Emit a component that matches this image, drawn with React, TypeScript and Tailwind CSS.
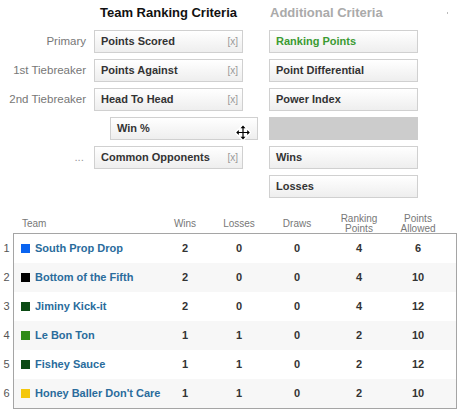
import React from 'react';

type Team = {
  name: string;
  color: string;
  wins: number;
  losses: number;
  draws: number;
  rankingPoints: number;
  pointsAllowed: number;
};

const teams: Team[] = [
  { name: 'South Prop Drop', color: 'bg-[#0a64f0]', wins: 2, losses: 0, draws: 0, rankingPoints: 4, pointsAllowed: 6 },
  { name: 'Bottom of the Fifth', color: 'bg-black', wins: 2, losses: 0, draws: 0, rankingPoints: 4, pointsAllowed: 10 },
  { name: 'Jiminy Kick-it', color: 'bg-[#0b4a14]', wins: 2, losses: 0, draws: 0, rankingPoints: 4, pointsAllowed: 12 },
  { name: 'Le Bon Ton', color: 'bg-[#2f8a18]', wins: 1, losses: 1, draws: 0, rankingPoints: 2, pointsAllowed: 10 },
  { name: 'Fishey Sauce', color: 'bg-[#0b4a14]', wins: 1, losses: 1, draws: 0, rankingPoints: 2, pointsAllowed: 12 },
  { name: "Honey Baller Don't Care", color: 'bg-[#f4c70c]', wins: 1, losses: 1, draws: 0, rankingPoints: 2, pointsAllowed: 10 },
];

const cols = 'grid grid-cols-[142px_58px_50px_66px_58px_60px_1fr]';

function Criterion({ label, removable, green }: { label: string; removable?: boolean; green?: boolean }) {
  return (
    <div className="flex h-[23px] items-center justify-between border border-[#d0d0d0] bg-linear-to-b from-white to-[#eeeeee] pl-[6px] pr-[4px]">
      <span className={`text-[11px] font-bold ${green ? 'text-[#3b9b32]' : 'text-[#333]'}`}>{label}</span>
      {removable && <span className="text-[10px] text-[#999]">[x]</span>}
    </div>
  );
}

function MoveCursor() {
  return (
    <svg className="absolute right-[7px] top-[7px]" width="16" height="17" viewBox="0 0 16 17">
      <g stroke="white" strokeWidth="2.5" strokeLinejoin="round">
        <path d="M8 1 L11 4.5 L9 4.5 L9 7.5 L12 7.5 L12 5.5 L15 8.5 L12 11.5 L12 9.5 L9 9.5 L9 12.5 L11 12.5 L8 16 L5 12.5 L7 12.5 L7 9.5 L4 9.5 L4 11.5 L1 8.5 L4 5.5 L4 7.5 L7 7.5 L7 4.5 L5 4.5 Z" fill="white" />
      </g>
      <path d="M8 1.5 L10.5 4.3 L8.6 4.3 L8.6 7.9 L12.2 7.9 L12.2 6 L14.8 8.5 L12.2 11 L12.2 9.1 L8.6 9.1 L8.6 12.7 L10.5 12.7 L8 15.5 L5.5 12.7 L7.4 12.7 L7.4 9.1 L3.8 9.1 L3.8 11 L1.2 8.5 L3.8 6 L3.8 7.9 L7.4 7.9 L7.4 4.3 L5.5 4.3 Z" fill="black" />
    </svg>
  );
}

export default function App() {
  return (
    <div className="relative h-[414px] w-[460px] bg-white font-['Liberation_Sans',Arial,sans-serif]">
      <span className="absolute left-[447px] top-[12px] h-[2px] w-px bg-[#bbb]" />

      {/* criteria */}
      <div className="grid grid-cols-[88px_149px_150px] gap-x-[6px] gap-y-[6px] pt-[2px] [&>*]:min-w-0">
        <div />
        <div className="flex h-[22px] items-center justify-center text-[13px] font-bold text-[#111]">Team Ranking Criteria</div>
        <div className="ml-[21px] flex h-[22px] items-center text-[13px] font-bold text-[#aaa]">Additional Criteria</div>

        <div className="flex h-[23px] items-center justify-end pr-[2px] text-[11.5px] text-[#777]">Primary</div>
        <Criterion label="Points Scored" removable />
        <div className="ml-[20px] w-[149px]"><Criterion label="Ranking Points" green /></div>

        <div className="flex h-[23px] items-center justify-end pr-[2px] text-[11.5px] text-[#777]">1st Tiebreaker</div>
        <Criterion label="Points Against" removable />
        <div className="ml-[20px] w-[149px]"><Criterion label="Point Differential" /></div>

        <div className="flex h-[23px] items-center justify-end pr-[2px] text-[11.5px] text-[#777]">2nd Tiebreaker</div>
        <Criterion label="Head To Head" removable />
        <div className="ml-[20px] w-[149px]"><Criterion label="Power Index" /></div>

        <div />
        <div className="relative ml-[16px] w-[148px]">
          <Criterion label="Win %" />
          <MoveCursor />
        </div>
        <div className="ml-[20px] h-[23px] w-[149px] bg-[#cccccc]" />

        <div className="flex h-[23px] items-center justify-end pr-[4px] text-[11.5px] text-[#999]">...</div>
        <Criterion label="Common Opponents" removable />
        <div className="ml-[20px] w-[149px]"><Criterion label="Wins" /></div>

        <div />
        <div />
        <div className="ml-[20px] w-[149px]"><Criterion label="Losses" /></div>
      </div>

      {/* standings */}
      <div className="mt-[16px]">
        <div className={`${cols} ml-[14px] h-[19px] w-[442px] items-center text-[10px] leading-[10px] text-[#777]`}>
          <div className="pl-[8px]">Team</div>
          <div className="text-center">Wins</div>
          <div className="text-center">Losses</div>
          <div className="text-center">Draws</div>
          <div className="text-center">Ranking<br />Points</div>
          <div className="text-center">Points<br />Allowed</div>
          <div />
        </div>

        <div className="flex">
          <div className="w-[13px] pt-px">
            {teams.map((t, i) => (
              <div key={t.name} className="flex h-[29px] items-center justify-center text-[11px] text-[#555]">{i + 1}</div>
            ))}
          </div>
          <div className="w-[444px] border border-[#a5a5a5]">
            {teams.map((t, i) => (
              <div
                key={t.name}
                className={`${cols} h-[29px] items-center text-[11px] font-bold text-[#333] ${i % 2 === 1 ? 'bg-[#f7f7f7]' : 'bg-white'}`}
              >
                <div className="flex items-center gap-[5px] pl-[7px]">
                  <span className={`h-[9px] w-[9px] shrink-0 ${t.color}`} />
                  <span className="whitespace-nowrap text-[#2a6c9c]">{t.name}</span>
                </div>
                <div className="text-center">{t.wins}</div>
                <div className="text-center">{t.losses}</div>
                <div className="text-center">{t.draws}</div>
                <div className="text-center">{t.rankingPoints}</div>
                <div className="text-center">{t.pointsAllowed}</div>
                <div />
              </div>
            ))}
          </div>
        </div>
      </div>
    </div>
  );
}
